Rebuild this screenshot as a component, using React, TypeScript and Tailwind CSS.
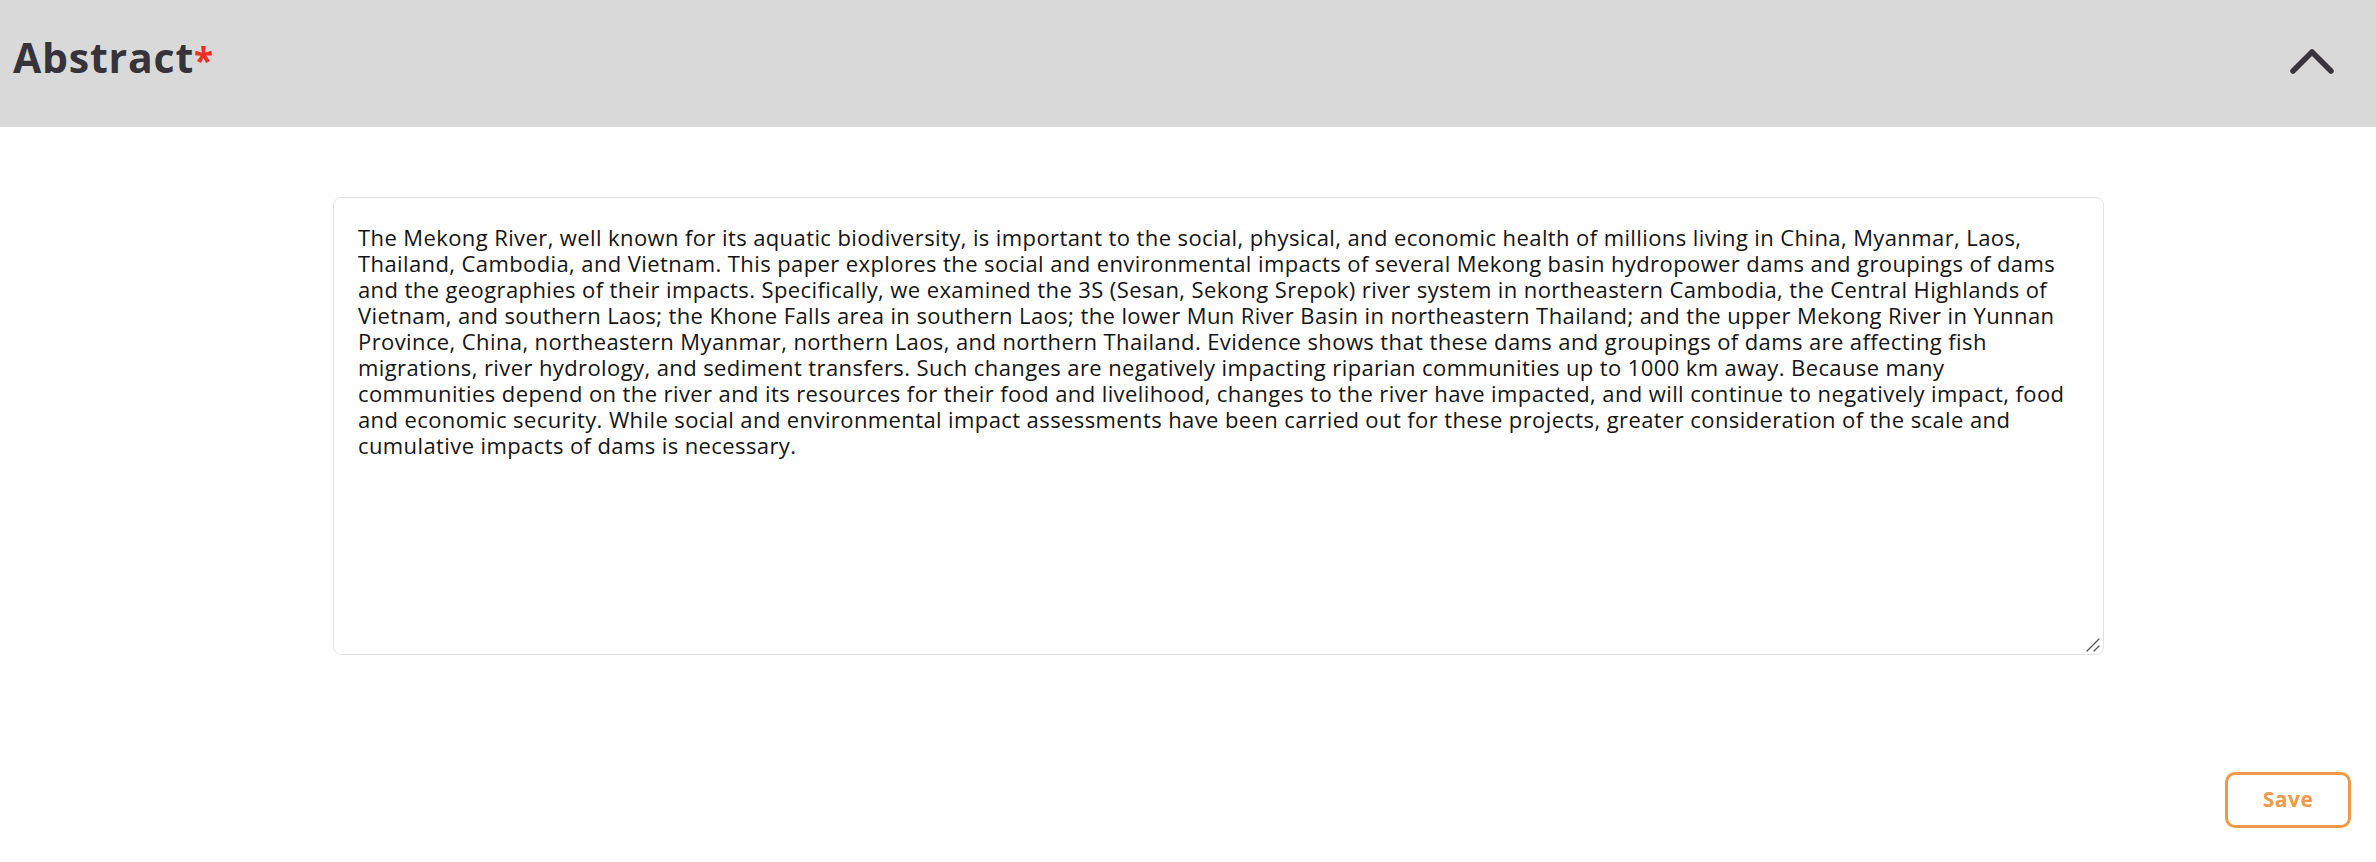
import React from "react";

const lines = [
  "The Mekong River, well known for its aquatic biodiversity, is important to the social, physical, and economic health of millions living in China, Myanmar, Laos,",
  "Thailand, Cambodia, and Vietnam. This paper explores the social and environmental impacts of several Mekong basin hydropower dams and groupings of dams",
  "and the geographies of their impacts. Specifically, we examined the 3S (Sesan, Sekong Srepok) river system in northeastern Cambodia, the Central Highlands of",
  "Vietnam, and southern Laos; the Khone Falls area in southern Laos; the lower Mun River Basin in northeastern Thailand; and the upper Mekong River in Yunnan",
  "Province, China, northeastern Myanmar, northern Laos, and northern Thailand. Evidence shows that these dams and groupings of dams are affecting fish",
  "migrations, river hydrology, and sediment transfers. Such changes are negatively impacting riparian communities up to 1000 km away. Because many",
  "communities depend on the river and its resources for their food and livelihood, changes to the river have impacted, and will continue to negatively impact, food",
  "and economic security. While social and environmental impact assessments have been carried out for these projects, greater consideration of the scale and",
  "cumulative impacts of dams is necessary.",
];

export default function App() {
  return (
    <div className="w-[2376px] h-[862px] bg-white flex flex-col font-['Open_Sans',sans-serif] overflow-hidden">
      <header className="h-[127px] shrink-0 bg-[#d9d9d9] flex items-start justify-between pl-[13px] pr-[38px]">
        <h2 className="mt-[37px] text-[41px] leading-[41px] font-bold tracking-[0.8px] text-[#36343a]">
          Abstract<span className="text-[#e8321f] text-[35px] tracking-normal">*</span>
        </h2>
        <button className="mt-[42px] w-[52px] h-[38px] flex items-center justify-center" aria-label="Collapse">
          <svg width="52" height="38" viewBox="0 0 52 38" fill="none">
            <path d="M7 29 L26 10 L45 29" stroke="#38353c" strokeWidth="5.5" strokeLinecap="round" strokeLinejoin="round" />
          </svg>
        </button>
      </header>

      <main className="flex-1 flex flex-col">
        <div
          role="textbox"
          className="relative mt-[70px] ml-[333px] w-[1771px] h-[458px] border border-[#e3e4ea] rounded-[8px] pl-[24px] pt-[26px] text-[22px] leading-[26px] tracking-[0.4px] text-[#141414]"
        >
          {lines.map((l, i) => (
            <div key={i} className="whitespace-nowrap">
              {l}
            </div>
          ))}
          <svg className="absolute right-[2px] bottom-[1px]" width="16" height="16" viewBox="0 0 16 16">
            <path d="M2 14 L14 2" stroke="#5a5a5a" strokeWidth="1.4" strokeLinecap="round" />
            <path d="M9 14 L14 9" stroke="#5a5a5a" strokeWidth="1.4" strokeLinecap="round" />
          </svg>
        </div>

        <div className="flex justify-end pr-[25px] mt-[117px]">
          <button className="w-[126px] h-[56px] border-[3px] border-[#f0994a] rounded-[10px] text-[#f0994a] text-[21px] font-bold tracking-[0.5px] flex items-center justify-center bg-white">
            Save
          </button>
        </div>
      </main>
    </div>
  );
}
